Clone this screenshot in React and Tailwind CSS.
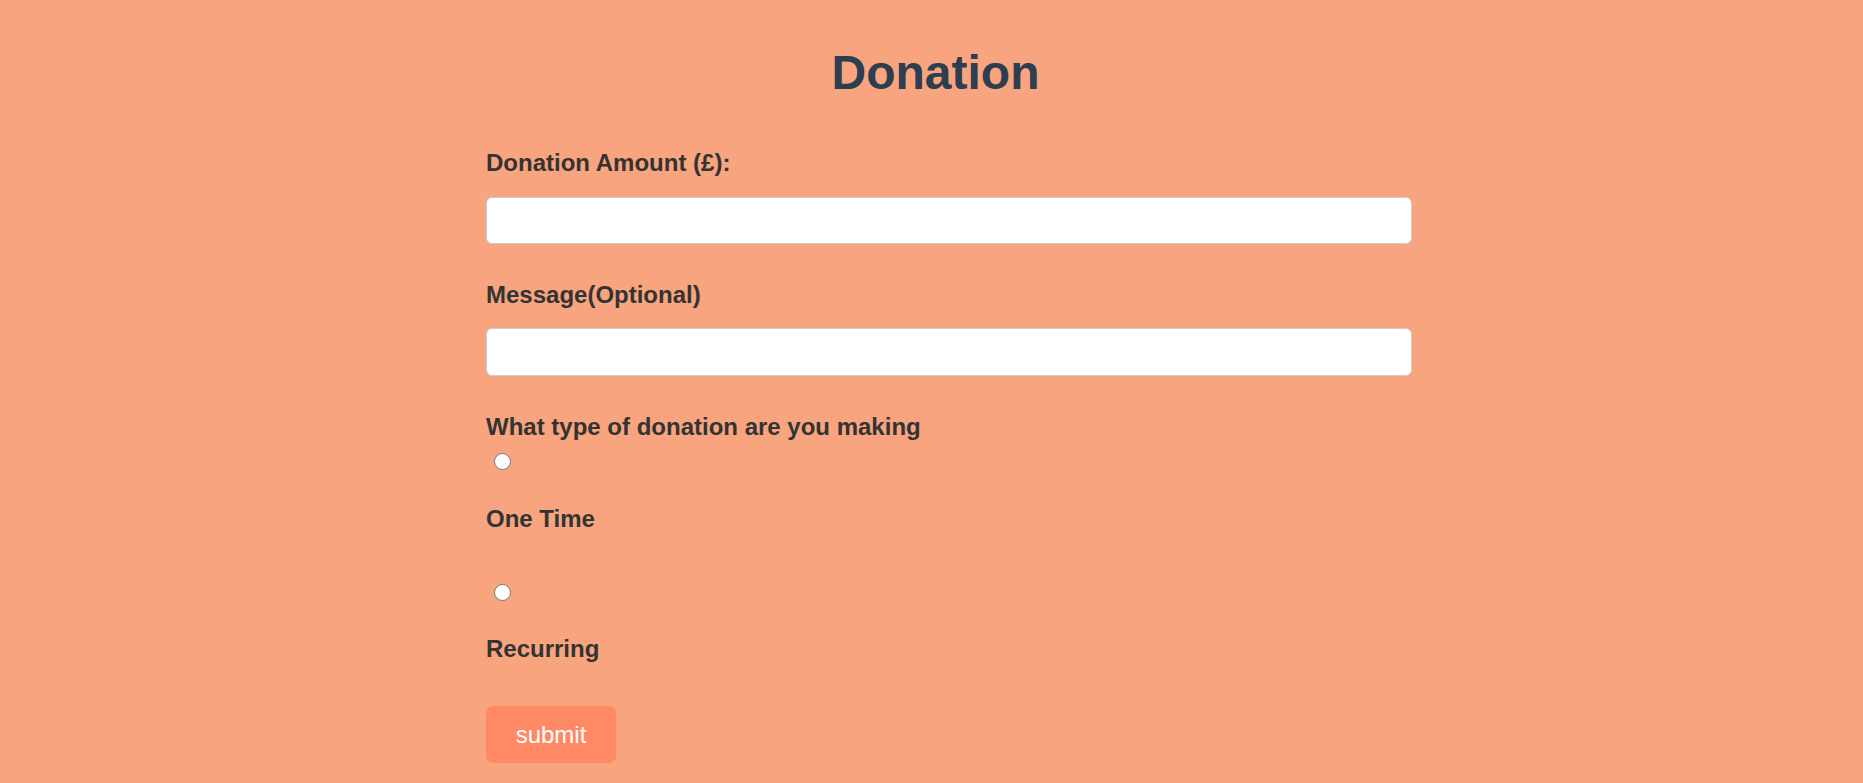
import React from "react";

const labelClass = "block text-[24px] leading-[28px] font-bold text-[#333333]";
const inputClass =
    "block w-[calc(100%+35px)] h-[47px] bg-white border border-[#cccccc] rounded-[6px] px-3 text-[20px] outline-none";

const RadioOption = ({ id, label, spacing, labelGap }) => (
    <div className={spacing}>
        <input
            id={id}
            type="radio"
            name="donationType"
            className="appearance-none block w-[17px] h-[17px] ml-[8px] rounded-full border border-[#767676] bg-white"
        />
        <label htmlFor={id} className={`${labelClass} ${labelGap}`}>
            {label}
        </label>
    </div>
);

export default function App() {
    return (
        <div
            className="min-h-[783px] w-full bg-[#f8a47e] pt-[46px]"
            style={{ fontFamily: '"Liberation Sans", Arial, sans-serif' }}
        >
            <h1 className="text-center pl-[8px] text-[48px] leading-[54px] font-bold text-[#2c3e50]">
                Donation
            </h1>

            <form className="mx-auto w-[891px] mt-[49px]" onSubmit={(e) => e.preventDefault()}>
                <label className={labelClass}>Donation Amount (£):</label>
                <input type="number" className={`${inputClass} mt-[20px]`} />

                <label className={`${labelClass} mt-[37px]`}>Message(Optional)</label>
                <input type="text" className={`${inputClass} mt-[19px] h-[48px]`} />

                <label className={`${labelClass} mt-[37px]`}>What type of donation are you making</label>

                <RadioOption id="one-time" label="One Time" spacing="mt-[12px]" labelGap="mt-[35px]" />
                <RadioOption id="recurring" label="Recurring" spacing="mt-[51px]" labelGap="mt-[34px]" />

                <button
                    type="submit"
                    className="block mt-[43px] w-[130px] h-[57px] rounded-[7px] bg-[#ff8964] text-white text-[24px]"
                >
                    submit
                </button>
            </form>
        </div>
    );
}
